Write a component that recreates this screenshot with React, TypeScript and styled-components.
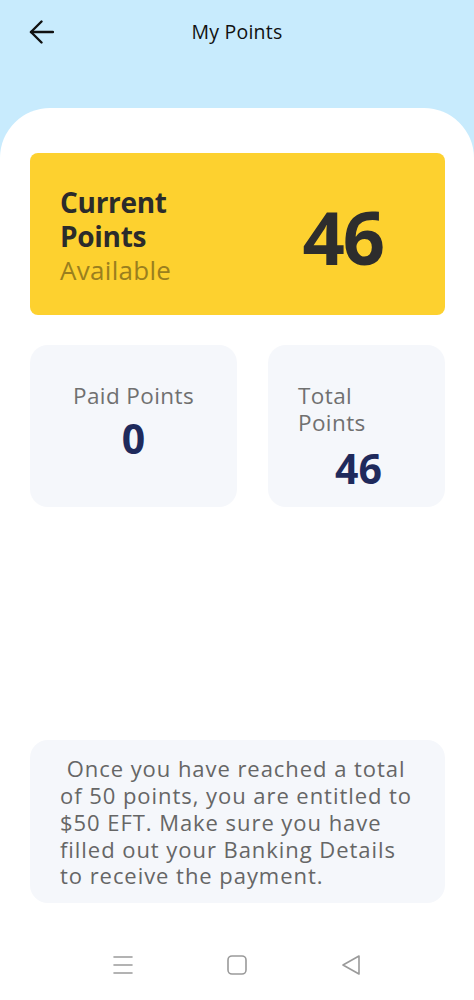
import React from 'react';
import styled, { createGlobalStyle } from 'styled-components';

const GlobalStyle = createGlobalStyle`
    html, body {
        margin: 0;
        padding: 0;
        background: #FFFFFF;
    }
    body {
        font-family: "Open Sans", "Noto Sans", sans-serif;
    }
`;

const Page = styled.div`
    width: 474px;
    height: 1000px;
    display: flex;
    flex-direction: column;
    background: #C8EBFD;
    overflow: hidden;
`;

const Header = styled.div`
    height: 64px;
    display: grid;
    grid-template-columns: 64px 1fr 64px;
    align-items: center;
    margin-bottom: 44px;
`;

const BackButton = styled.button`
    border: none;
    background: none;
    padding: 0 0 0 29px;
    display: flex;
    align-items: center;
    cursor: pointer;
`;

const Title = styled.div`
    text-align: center;
    font-size: 19.5px;
    letter-spacing: 0.2px;
    color: #111;
    padding-bottom: 1px;
`;

const Sheet = styled.div`
    flex: 1;
    background: #FFFFFF;
    border-radius: 50px 50px 0 0;
    padding: 45px 29px 0 30px;
    display: flex;
    flex-direction: column;
`;

const CurrentCard = styled.div`
    height: 162px;
    box-sizing: border-box;
    background: #FDD12F;
    border-radius: 8px;
    display: flex;
    align-items: center;
    justify-content: space-between;
    padding: 4px 62px 0 30px;
`;

const CurrentLabel = styled.div`
    display: flex;
    flex-direction: column;
    line-height: 34px;
`;

const CurrentTitle = styled.div`
    font-size: 28px;
    font-weight: 700;
    color: #2B2B2B;
    letter-spacing: -0.3px;
`;

const CurrentSub = styled.div`
    font-size: 26px;
    color: #9A7F1E;
    letter-spacing: 0.3px;
`;

const CurrentValue = styled.div`
    font-size: 74px;
    font-weight: 700;
    color: #2D2D2D;
    letter-spacing: -2px;
`;

const StatRow = styled.div`
    display: grid;
    grid-template-columns: 207px 177px;
    gap: 31px;
    margin-top: 30px;
`;

const StatCard = styled.div<{ $align: 'center' | 'left' }>`
    height: 162px;
    box-sizing: border-box;
    background: #F5F7FB;
    border-radius: 18px;
    padding: 37px 24px 0 30px;
    display: flex;
    flex-direction: column;
    align-items: ${p => (p.$align === 'center' ? 'center' : 'flex-start')};
    ${p => p.$align === 'center' && 'padding-left: 24px;'}
`;

const StatLabel = styled.div`
    font-size: 22.5px;
    line-height: 27px;
    letter-spacing: 0.4px;
    color: #707070;
`;

const StatValue = styled.div<{ $gap: number; $shift?: number }>`
    font-size: 41px;
    font-weight: 700;
    color: #1F2A5C;
    line-height: 46px;
    margin-top: ${p => p.$gap}px;
    align-self: center;
    margin-left: ${p => p.$shift ?? 0}px;
`;

const InfoCard = styled.div`
    margin-top: auto;
    background: #F5F7FB;
    border-radius: 18px;
    padding: 15px 10px 14px 30px;
    font-size: 22px;
    line-height: 26.7px;
    letter-spacing: 0.95px;
    color: #666666;
    white-space: nowrap;
`;

const NavBar = styled.div`
    height: 97px;
    display: flex;
    align-items: flex-end;
    justify-content: center;
    gap: 92px;
    padding-bottom: 24px;
    box-sizing: border-box;
    margin: 0 -29px 0 -30px;
`;

const NavIcon = styled.svg`
    width: 22px;
    height: 22px;
    display: block;
`;

export default function App() {
    return <>
        <GlobalStyle />
        <Page>
            <Header>
                <BackButton aria-label="Back">
                    <svg width="25" height="24" viewBox="0 0 25 24" fill="none" stroke="#111" strokeWidth="2.4" strokeLinecap="round" strokeLinejoin="round">
                        <path d="M24 12H2" />
                        <path d="M12.5 1.5L2 12l10.5 10.5" />
                    </svg>
                </BackButton>
                <Title>My Points</Title>
                <div />
            </Header>
            <Sheet>
                <CurrentCard>
                    <CurrentLabel>
                        <CurrentTitle>Current</CurrentTitle>
                        <CurrentTitle>Points</CurrentTitle>
                        <CurrentSub>Available</CurrentSub>
                    </CurrentLabel>
                    <CurrentValue>46</CurrentValue>
                </CurrentCard>
                <StatRow>
                    <StatCard $align="center">
                        <StatLabel>Paid Points</StatLabel>
                        <StatValue $gap={6}>0</StatValue>
                    </StatCard>
                    <StatCard $align="left">
                        <StatLabel>Total<br />Points</StatLabel>
                        <StatValue $gap={9} $shift={-2}>46</StatValue>
                    </StatCard>
                </StatRow>
                <InfoCard>
                    &nbsp;Once you have reached a total<br />
                    of 50 points, you are entitled to<br />
                    $50 EFT. Make sure you have<br />
                    filled out your Banking Details<br />
                    to receive the payment.
                </InfoCard>
                <NavBar>
                    <NavIcon viewBox="0 0 22 22" fill="none" stroke="#9A9A9A" strokeWidth="1.6" strokeLinecap="round">
                        <path d="M2 3h18M2 11h18M2 19h18" />
                    </NavIcon>
                    <NavIcon viewBox="0 0 22 22" fill="none" stroke="#9A9A9A" strokeWidth="1.6">
                        <rect x="2" y="2" width="18" height="18" rx="4" />
                    </NavIcon>
                    <NavIcon viewBox="0 0 22 22" fill="none" stroke="#9A9A9A" strokeWidth="1.6" strokeLinejoin="round">
                        <path d="M19 2L3 11l16 9z" />
                    </NavIcon>
                </NavBar>
            </Sheet>
        </Page>
    </>;
}
